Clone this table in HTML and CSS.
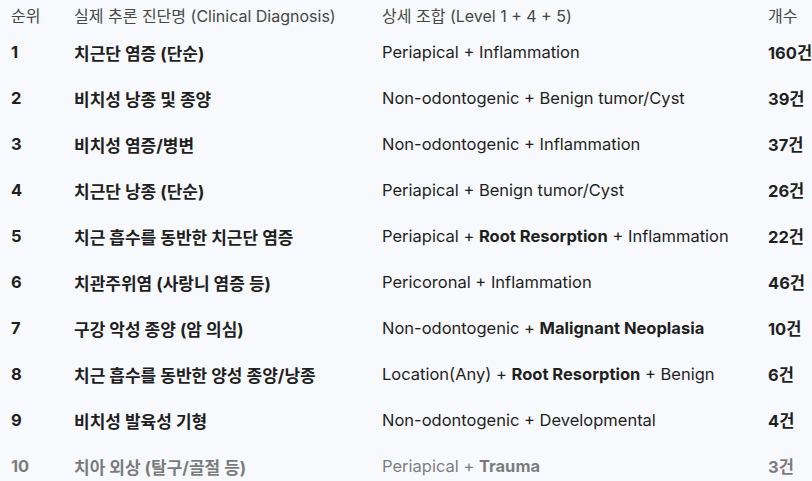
FILE: index.html
```html
<!DOCTYPE html>
<html lang="ko">
<head>
<meta charset="utf-8">
<link rel="stylesheet" href="styles.css">
</head>
<body>
<div class="table">
  <div class="row head">
    <div>순위</div><div>실제 추론 진단명 (Clinical Diagnosis)</div><div>상세 조합 (Level 1 + 4 + 5)</div><div>개수</div>
  </div>
  <div class="row">
    <div class="rank">1</div><div class="diag">치근단 염증 (단순)</div><div>Periapical + Inflammation</div><div class="count">160건</div>
  </div>
  <div class="row">
    <div class="rank">2</div><div class="diag">비치성 낭종 및 종양</div><div>Non-odontogenic + Benign tumor/Cyst</div><div class="count">39건</div>
  </div>
  <div class="row">
    <div class="rank">3</div><div class="diag">비치성 염증/병변</div><div>Non-odontogenic + Inflammation</div><div class="count">37건</div>
  </div>
  <div class="row">
    <div class="rank">4</div><div class="diag">치근단 낭종 (단순)</div><div>Periapical + Benign tumor/Cyst</div><div class="count">26건</div>
  </div>
  <div class="row">
    <div class="rank">5</div><div class="diag">치근 흡수를 동반한 치근단 염증</div><div>Periapical + <b>Root Resorption</b> + Inflammation</div><div class="count">22건</div>
  </div>
  <div class="row">
    <div class="rank">6</div><div class="diag">치관주위염 (사랑니 염증 등)</div><div>Pericoronal + Inflammation</div><div class="count">46건</div>
  </div>
  <div class="row">
    <div class="rank">7</div><div class="diag">구강 악성 종양 (암 의심)</div><div>Non-odontogenic + <b>Malignant Neoplasia</b></div><div class="count">10건</div>
  </div>
  <div class="row">
    <div class="rank">8</div><div class="diag">치근 흡수를 동반한 양성 종양/낭종</div><div>Location(Any) + <b>Root Resorption</b> + Benign</div><div class="count">6건</div>
  </div>
  <div class="row">
    <div class="rank">9</div><div class="diag">비치성 발육성 기형</div><div>Non-odontogenic + Developmental</div><div class="count">4건</div>
  </div>
  <div class="row faded">
    <div class="rank">10</div><div class="diag">치아 외상 (탈구/골절 등)</div><div>Periapical + <b>Trauma</b></div><div class="count">3건</div>
  </div>
</div>
</body>
</html>
```
FILE: styles.css
```css
html, body {
  margin: 0;
  background: #f8f9fc;
}
body {
  font-family: "Inter", "Noto Sans CJK KR", sans-serif;
  font-size: 16.5px;
  color: #1f1f1f;
  overflow: hidden;
}
.table {
  padding-left: 11px;
}
.row {
  display: grid;
  grid-template-columns: 63px 308px 386px auto;
  align-items: center;
  height: 46px;
  white-space: nowrap;
}
.row.head {
  height: 29px;
  color: #444746;
  font-size: 16px;
  font-weight: 400;
}
.rank, .diag, .count, b {
  font-weight: 700;
}
.diag {
  font-size: 17px;
}
.head .diag {
  font-size: 16px;
  font-weight: 400;
}
.faded {
  opacity: 0.58;
}
```
